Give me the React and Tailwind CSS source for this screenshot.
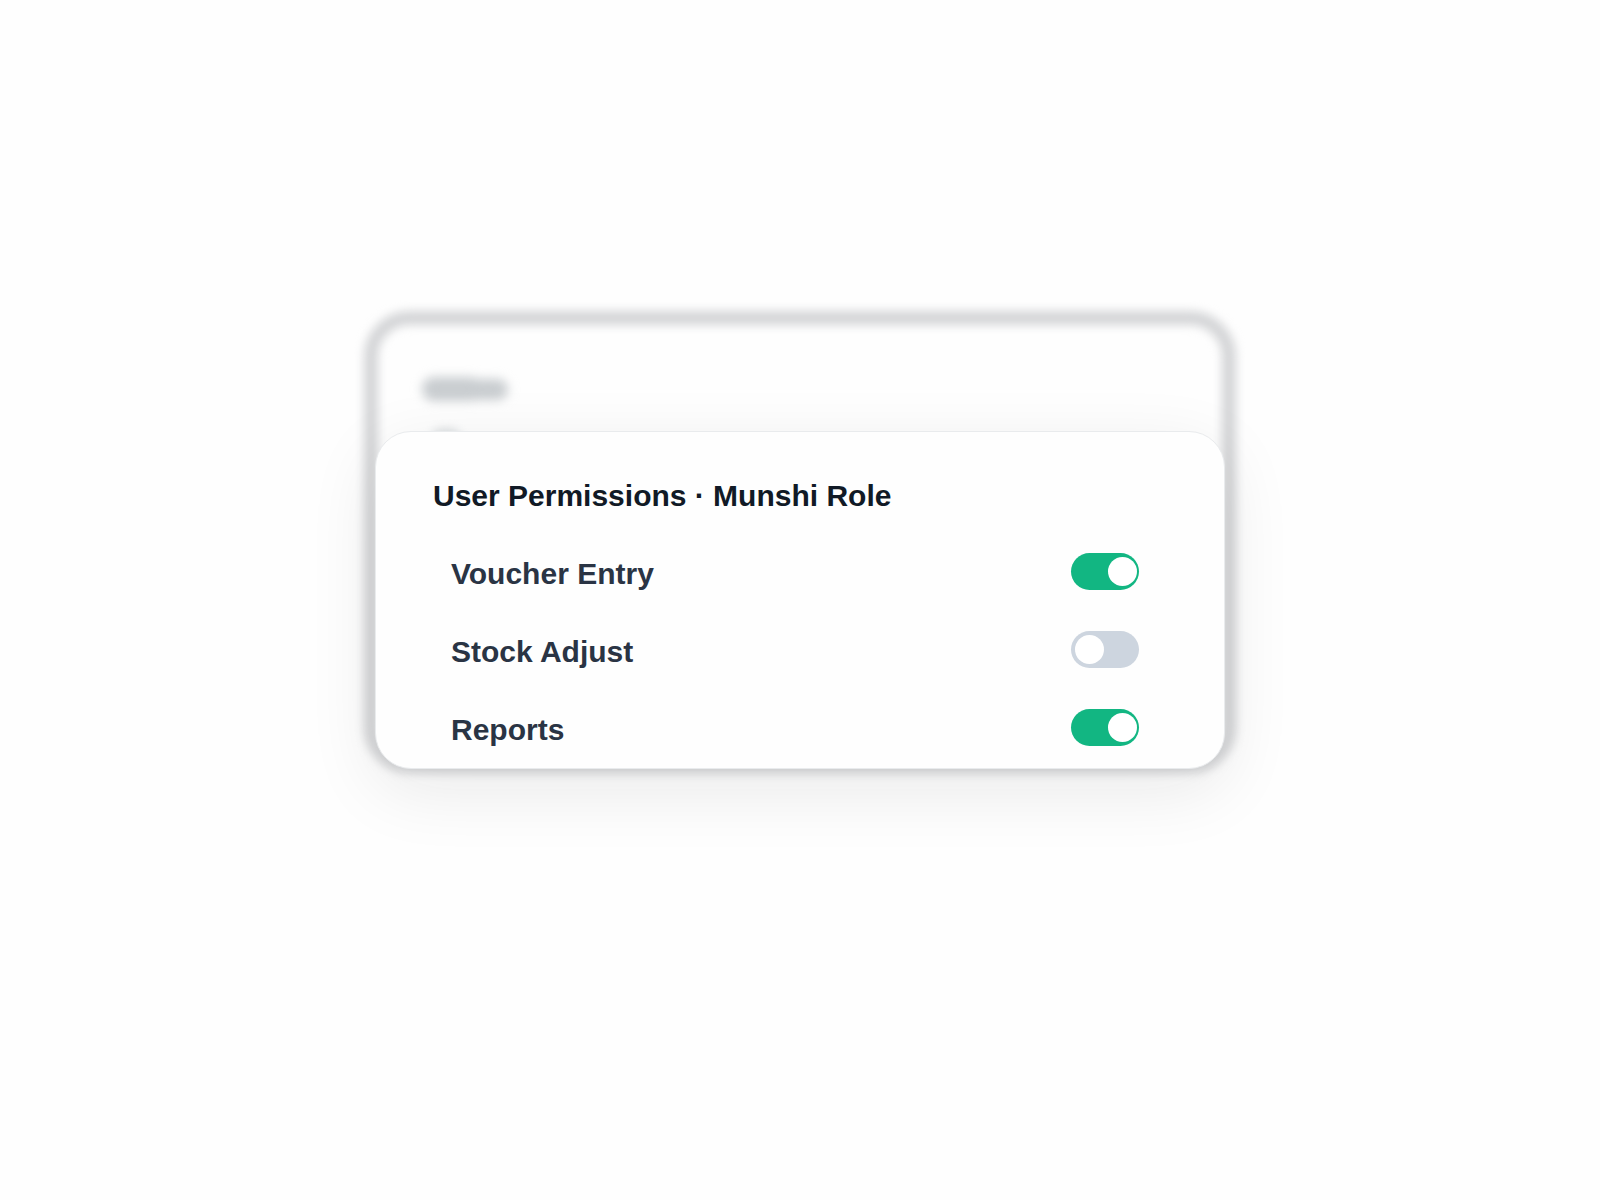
import { useState } from "react";

const PERMISSIONS = [
  { id: "voucher-entry", label: "Voucher Entry", enabled: true },
  { id: "stock-adjust", label: "Stock Adjust", enabled: false },
  { id: "reports", label: "Reports", enabled: true },
];

function PermissionRow({ id, label, enabled }) {
  const [checked, setChecked] = useState(enabled);
  return (
    <li className="flex items-start justify-between pr-7 pl-[18px]">
      <label
        htmlFor={id}
        className="pt-1 text-[30px] leading-[34px] font-bold text-[#2a3444]"
      >
        {label}
      </label>
      <input
        id={id}
        type="checkbox"
        role="switch"
        checked={checked}
        onChange={(event) => setChecked(event.target.checked)}
        className="flex h-[37px] w-[68px] shrink-0 cursor-pointer appearance-none items-center rounded-full bg-[#cdd5df] px-1 before:size-[29px] before:rounded-full before:bg-white before:content-[''] checked:justify-end checked:bg-[#12b682] checked:px-[2px]"
      />
    </li>
  );
}

/* Out-of-focus card that sits behind the permissions panel. */
function BackdropCard() {
  return (
    <div
      aria-hidden="true"
      className="col-start-1 row-start-1 rounded-[46px] border-[14px] border-[#d4d5d7] px-[44px] pt-[52px] blur-[5px]"
    >
      <div className="flex items-center blur-[2px]">
        <div className="h-[24px] w-[60px] rounded-full bg-[#c9cdd0]" />
        <div className="-ml-7 h-[21px] w-[54px] rounded-full bg-[#c9cdd0]" />
      </div>
      <div className="mt-7 ml-2 h-6 w-8 rounded-full bg-[#d9dddf]" />
    </div>
  );
}

export default function App() {
  return (
    <main className="flex min-h-screen items-start justify-center bg-[#fefefe] px-4 pt-[311px] pb-16 font-['Liberation_Sans',Arial,sans-serif]">
      <div className="grid w-full max-w-[872px]">
        <BackdropCard />
        <section
          aria-labelledby="permissions-title"
          className="z-10 col-start-1 row-start-1 mx-[11px] mt-[120px] mb-1 rounded-[36px] border border-[#e9ebed] bg-[#fefefe] px-[57px] pt-[47px] pb-[21px] shadow-[0_20px_70px_rgba(18,22,26,0.09)]"
        >
          <h1
            id="permissions-title"
            className="text-[30px] leading-[34px] font-bold text-[#111a26]"
          >
            User Permissions · Munshi Role
          </h1>
          <ul className="mt-10 flex flex-col gap-10">
            {PERMISSIONS.map((permission) => (
              <PermissionRow key={permission.id} {...permission} />
            ))}
          </ul>
        </section>
      </div>
    </main>
  );
}
